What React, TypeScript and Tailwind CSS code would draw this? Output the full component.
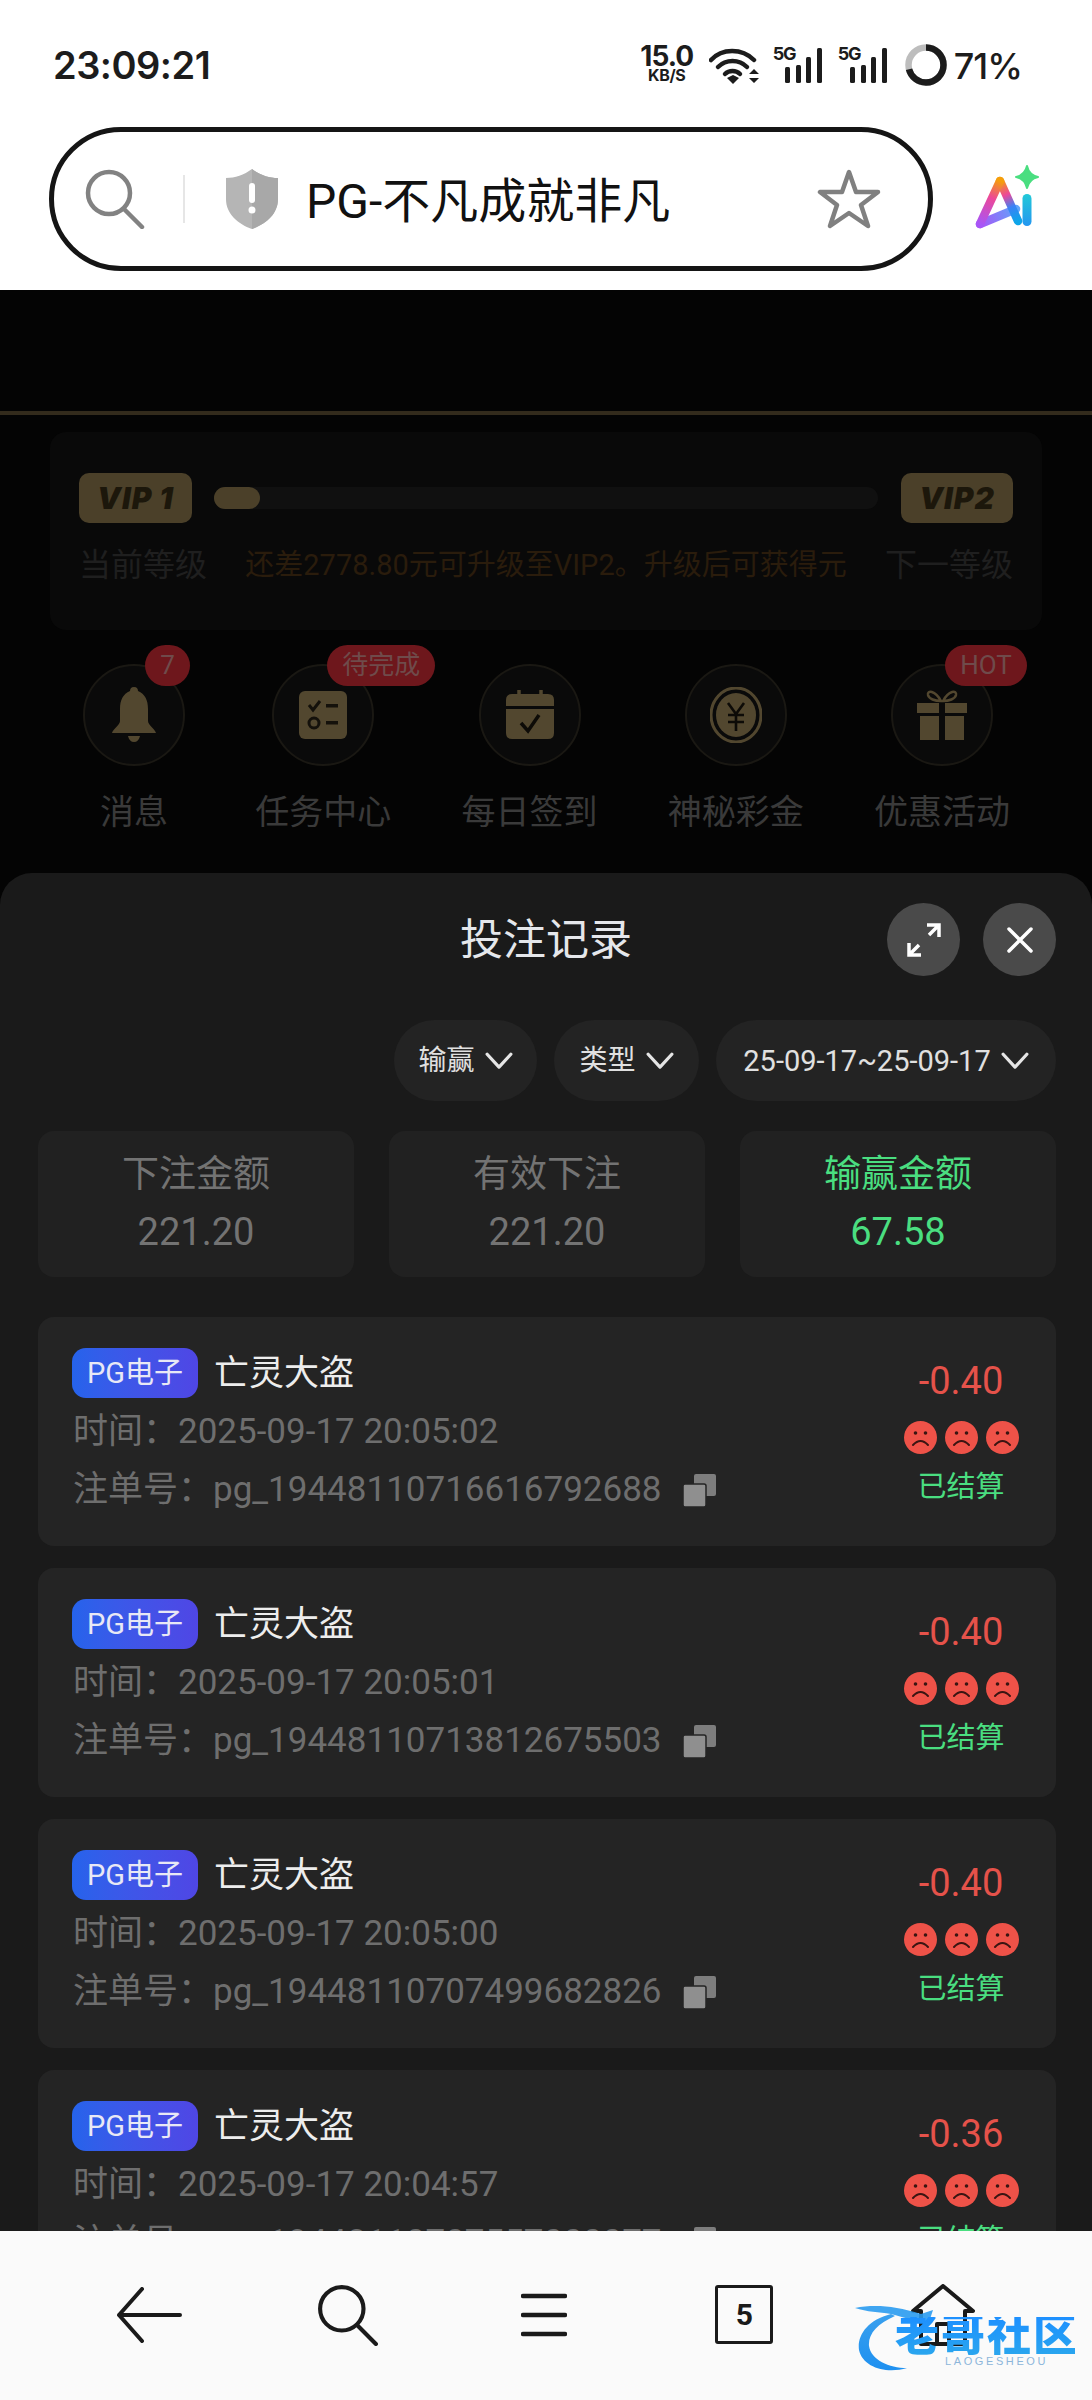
const FONT = 'font-["Roboto","Noto_Sans_CJK_SC",sans-serif]';

function Wifi() {
  return (
    <svg width="50" height="38" viewBox="0 0 50 38" className="block">
      <path d="M2 13 C13 1 33 1 45 13" fill="none" stroke="#1c1c1c" strokeWidth="4.5" strokeLinecap="round" />
      <path d="M9 20 C17 12 30 12 38 20" fill="none" stroke="#1c1c1c" strokeWidth="4.5" strokeLinecap="round" />
      <path d="M16 27 C20 23 27 23 31 27" fill="none" stroke="#1c1c1c" strokeWidth="4.5" strokeLinecap="round" />
      <path d="M18 31 L24 28 L30 31 L24 37 Z" fill="#1c1c1c" />
      <path d="M40 27 L45 22 L50 27 Z M40 31 L50 31 L45 36 Z" fill="#1c1c1c" />
    </svg>
  );
}

function Signal() {
  return (
    <div className="relative w-[49px] h-[38px]">
      <span className="absolute left-[-1px] top-[-2px] text-[18px] leading-[18px] font-bold text-[#1c1c1c] font-['Inter',sans-serif] tracking-[-1.2px]">5G</span>
      <svg width="49" height="38" viewBox="0 0 49 38" className="block">
        <rect x="11" y="20" width="5" height="16" rx="1.5" fill="#1c1c1c" />
        <rect x="22" y="18" width="5" height="18" rx="1.5" fill="#1c1c1c" />
        <rect x="32" y="10" width="5" height="26" rx="1.5" fill="#1c1c1c" />
        <rect x="43" y="1" width="5" height="35" rx="1.5" fill="#1c1c1c" />
      </svg>
    </div>
  );
}

function Ring() {
  return (
    <svg width="42" height="42" viewBox="0 0 42 42" className="block">
      <circle cx="21" cy="21" r="17.5" fill="none" stroke="#bdbdbd" strokeWidth="6.5" />
      <circle cx="21" cy="21" r="17.5" fill="none" stroke="#1c1c1c" strokeWidth="6.5" pathLength="100" strokeDasharray="71 29" transform="rotate(-90 21 21)" />
    </svg>
  );
}

function SearchGlass({ color, w, h, sw }: { color: string; w: number; h: number; sw: number }) {
  return (
    <svg width={w} height={h} viewBox="0 0 60 60" className="block">
      <circle cx="24" cy="24" r="21" fill="none" stroke={color} strokeWidth={sw} />
      <path d="M39 40 L57 58" stroke={color} strokeWidth={sw} strokeLinecap="round" />
    </svg>
  );
}

function Shield() {
  return (
    <svg width="56" height="62" viewBox="0 0 56 62" className="block">
      <path d="M28 1 C36 7 45 10 54 10 L54 31 C54 46 42 56 28 61 C14 56 2 46 2 31 L2 10 C11 10 20 7 28 1 Z" fill="#b5b5b5" />
      <path d="M28 1 C36 7 45 10 54 10 L54 31 C54 46 42 56 28 61 Z" fill="#a8a8a8" />
      <rect x="25" y="15" width="6" height="20" rx="3" fill="#fff" />
      <circle cx="28" cy="42" r="3.5" fill="#fff" />
    </svg>
  );
}

function Star() {
  return (
    <svg width="64" height="60" viewBox="0 0 64 60" className="block">
      <path d="M32 3 L39 23 L61 23 L44 36 L51 57 L32 44 L13 57 L20 36 L3 23 L25 23 Z" fill="none" stroke="#808080" strokeWidth="4.5" strokeLinejoin="round" />
    </svg>
  );
}

function AiLogo() {
  return (
    <svg width="66" height="64" viewBox="0 0 66 64" className="block overflow-visible">
      <defs>
        <linearGradient id="aiL" gradientUnits="userSpaceOnUse" x1="6" y1="57" x2="26" y2="14">
          <stop offset="0" stopColor="#a855f7" />
          <stop offset="0.6" stopColor="#ec4899" />
          <stop offset="1" stopColor="#f59e0b" />
        </linearGradient>
        <linearGradient id="aiC" gradientUnits="userSpaceOnUse" x1="6" y1="57" x2="42" y2="42">
          <stop offset="0" stopColor="#a855f7" />
          <stop offset="1" stopColor="#60a5fa" />
        </linearGradient>
        <linearGradient id="aiM" gradientUnits="userSpaceOnUse" x1="26" y1="14" x2="44" y2="54">
          <stop offset="0" stopColor="#f59e0b" />
          <stop offset="0.35" stopColor="#ec4899" />
          <stop offset="0.65" stopColor="#3b82f6" />
          <stop offset="1" stopColor="#0ea5e9" />
        </linearGradient>
        <linearGradient id="aiR" x1="0" y1="0" x2="0" y2="1">
          <stop offset="0" stopColor="#22c9d8" />
          <stop offset="1" stopColor="#2496f0" />
        </linearGradient>
      </defs>
      <path d="M6 57 L42 42" fill="none" stroke="url(#aiC)" strokeWidth="8.5" strokeLinecap="round" />
      <path d="M26 14 L44 54" fill="none" stroke="url(#aiM)" strokeWidth="8.5" strokeLinecap="round" />
      <path d="M6 57 L26 14" fill="none" stroke="url(#aiL)" strokeWidth="8.5" strokeLinecap="round" />
      <rect x="48.5" y="27" width="9" height="32" rx="4.5" fill="url(#aiR)" />
      <path d="M53 -1 Q55 8 64 10 Q55 12 53 21 Q51 12 42 10 Q51 8 53 -1 Z" fill="#4ade80" stroke="#4ade80" strokeWidth="2" strokeLinejoin="round" />
    </svg>
  );
}

const GOLD = "#52472f";

function Bell() {
  return (
    <svg width="46" height="56" viewBox="0 0 46 56" className="block">
      <path d="M23 0 C26 0 27 2 27 4 C34 7 37 13 37 22 L37 34 C37 38 44 42 45 46 L1 46 C2 42 9 38 9 34 L9 22 C9 13 12 7 19 4 C19 2 20 0 23 0 Z" fill={GOLD} />
      <path d="M17 49 L29 49 C28 53 26 55 23 55 C20 55 18 53 17 49 Z" fill={GOLD} />
    </svg>
  );
}

function Tasks() {
  return (
    <svg width="48" height="48" viewBox="0 0 48 48" className="block">
      <rect width="48" height="48" rx="6" fill={GOLD} />
      <path d="M10 14 L14 19 L21 10" fill="none" stroke="#14110b" strokeWidth="3" />
      <rect x="27" y="13" width="12" height="3.5" fill="#14110b" />
      <circle cx="15" cy="32" r="5" fill="none" stroke="#14110b" strokeWidth="3" />
      <rect x="27" y="30" width="12" height="3.5" fill="#14110b" />
    </svg>
  );
}

function Calendar() {
  return (
    <svg width="48" height="50" viewBox="0 0 48 50" className="block">
      <path d="M13 0 L13 7 M35 0 L35 7" stroke={GOLD} strokeWidth="3.5" strokeLinecap="round" />
      <path d="M6 4 L42 4 Q48 4 48 10 L48 16 L0 16 L0 10 Q0 4 6 4 Z" fill={GOLD} />
      <path d="M0 19 L48 19 L48 43 Q48 49 42 49 L6 49 Q0 49 0 43 Z" fill={GOLD} />
      <path d="M15 33 L22 41 L33 25" fill="none" stroke="#0d0b07" strokeWidth="3.5" />
    </svg>
  );
}

function Coin() {
  return (
    <svg width="52" height="56" viewBox="0 0 52 56" className="block">
      <ellipse cx="26" cy="28" rx="25" ry="27" fill="none" stroke={GOLD} strokeWidth="3" />
      <ellipse cx="26" cy="28" rx="20" ry="22" fill={GOLD} />
      <path d="M18 16 L26 27 L34 16 M18 28 L34 28 M18 35 L34 35 M26 27 L26 44" fill="none" stroke="#0d0b07" strokeWidth="2.6" />
    </svg>
  );
}

function Gift() {
  return (
    <svg width="50" height="50" viewBox="0 0 50 50" className="block">
      <path d="M24 11 C18 0 10 0 11 5 C12 9 18 11 24 11 Z M26 11 C32 0 40 0 39 5 C38 9 32 11 26 11 Z" fill="none" stroke={GOLD} strokeWidth="2.5" />
      <rect x="0" y="13" width="22" height="10" fill={GOLD} />
      <rect x="28" y="13" width="22" height="10" fill={GOLD} />
      <rect x="3" y="26" width="19" height="24" fill={GOLD} />
      <rect x="28" y="26" width="19" height="24" fill={GOLD} />
    </svg>
  );
}

function Chevron({ size = 28 }: { size?: number }) {
  return (
    <svg width={size} height={size * 0.62} viewBox="0 0 26 16" className="block">
      <path d="M2 2 L13 14 L24 2" fill="none" stroke="#e5e5e5" strokeWidth="3" strokeLinecap="round" strokeLinejoin="round" />
    </svg>
  );
}

function Face() {
  return (
    <svg width="33" height="33" viewBox="0 0 33 33" className="block">
      <circle cx="16.5" cy="16.5" r="16.5" fill="#ee5248" />
      <circle cx="11.5" cy="12" r="1.8" fill="#3a1512" />
      <circle cx="21.5" cy="12" r="1.8" fill="#3a1512" />
      <path d="M9 24 Q16.5 16 24 24" fill="none" stroke="#3a1512" strokeWidth="2" strokeLinecap="round" />
    </svg>
  );
}

function Copy() {
  return (
    <svg width="33" height="33" viewBox="0 0 33 33" className="block">
      <rect x="11" y="0" width="22" height="22" rx="2" fill="#7d7d7d" />
      <rect x="0" y="10" width="23" height="23" rx="2" fill="#8f8f8f" stroke="#242424" strokeWidth="1.5" />
    </svg>
  );
}

const shortcuts = [
  { label: "消息", icon: <Bell />, badge: "7", badgeClass: "left-[60px] w-[45px]" },
  { label: "任务中心", icon: <Tasks />, badge: "待完成", badgeClass: "left-[53px] w-[108px]" },
  { label: "每日签到", icon: <Calendar /> },
  { label: "神秘彩金", icon: <Coin /> },
  { label: "优惠活动", icon: <Gift />, badge: "HOT", badgeClass: "left-[52px] w-[82px]" },
];

function Shortcut({ s }: { s: (typeof shortcuts)[number] }) {
  return (
    <div className="flex flex-col items-center">
      <div className="relative w-[102px] h-[102px] rounded-full border-2 border-[#1a1813] bg-[#0a0a0a] flex items-center justify-center">
        {s.icon}
        {s.badge && (
          <span className={`absolute top-[-21px] h-[41px] rounded-full bg-[#6e171c] text-[#6f4b4b] text-[26px] leading-[41px] text-center whitespace-nowrap ${s.badgeClass}`}>
            {s.badge}
          </span>
        )}
      </div>
      <div className="mt-[26px] text-[34px] leading-[40px] text-[#3a3a3a] whitespace-nowrap">{s.label}</div>
    </div>
  );
}

const records = [
  { amt: "-0.40", time: "2025-09-17 20:05:02", id: "pg_19448110716616792688" },
  { amt: "-0.40", time: "2025-09-17 20:05:01", id: "pg_19448110713812675503" },
  { amt: "-0.40", time: "2025-09-17 20:05:00", id: "pg_19448110707499682826" },
  { amt: "-0.36", time: "2025-09-17 20:04:57", id: "pg_19448110707557000077" },
];

function Record({ r }: { r: (typeof records)[number] }) {
  return (
    <div className="shrink-0 h-[229px] rounded-[16px] bg-[#242424] flex justify-between pl-[34px] pr-[10px]">
      <div className="pt-[31px]">
        <div className="flex items-center gap-[16px] h-[50px]">
          <span className="w-[126px] h-[50px] rounded-[14px] bg-gradient-to-r from-[#2563eb] to-[#4f46e5] text-[#e8e8f5] text-[29px] leading-[50px] text-center whitespace-nowrap">PG电子</span>
          <span className="mt-[1px] text-[35px] leading-[50px] text-[#ededed]">亡灵大盗</span>
        </div>
        <div className="mt-[14px] h-[40px] text-[35px] leading-[40px] text-[#6e6e6e] whitespace-nowrap pl-[1px]">时间：{r.time}</div>
        <div className="mt-[18px] h-[40px] flex items-center gap-[21px] text-[35px] leading-[40px] text-[#6e6e6e] whitespace-nowrap pl-[1px]">
          <span>注单号：{r.id}</span>
          <Copy />
        </div>
      </div>
      <div className="w-[170px] flex flex-col items-center pt-[44px]">
        <div className="text-[38px] leading-[40px] text-[#e5524a]">{r.amt}</div>
        <div className="mt-[20px] flex gap-[8px]">
          <Face />
          <Face />
          <Face />
        </div>
        <div className="mt-[15px] text-[29px] leading-[36px] text-[#4ade80]">已结算</div>
      </div>
    </div>
  );
}

function Stat({ label, value, green }: { label: string; value: string; green?: boolean }) {
  return (
    <div className="h-[146px] rounded-[16px] bg-[#212121] flex flex-col items-center pt-[22px]">
      <div className={`text-[37px] leading-[44px] ${green ? "text-[#4ade80]" : "text-[#737373]"}`}>{label}</div>
      <div className={`mt-[13px] text-[38px] leading-[44px] ${green ? "text-[#4ade80]" : "text-[#737373]"}`}>{value}</div>
    </div>
  );
}

function Filter({ label, w, text }: { label: string; w: string; text: string }) {
  return (
    <div className={`h-[81px] rounded-full bg-[#232323] flex items-center justify-center gap-[10px] leading-[36px] text-[#e0e0e0] ${text} ${w}`}>
      <span className="whitespace-nowrap">{label}</span>
      <Chevron />
    </div>
  );
}

function Watermark() {
  return (
    <div className="absolute left-[855px] top-[69px] w-[220px] h-[72px]">
      <svg width="100" height="72" viewBox="0 0 100 72" className="absolute left-0 top-0">
        <defs>
          <linearGradient id="wmA" x1="0" y1="0" x2="0" y2="1">
            <stop offset="0" stopColor="#3aa0ee" />
            <stop offset="1" stopColor="#1e90f0" />
          </linearGradient>
        </defs>
        <path d="M36 14 C12 20 2 36 4 50 C8 68 32 74 52 68 C34 68 16 60 14 46 C13 34 22 24 40 16 Z" fill="url(#wmA)" />
        <path d="M0 8 C20 4 40 6 66 14 L78 10 L74 22 C60 22 52 18 36 14 C24 12 12 12 0 8 Z" fill="#2a9bf0" opacity="0.9" />
      </svg>
      <div className="absolute left-[40px] top-[17px] w-[180px] text-[44px] leading-[38px] font-black tracking-[2px] text-transparent bg-clip-text bg-gradient-to-b from-[#1e90ff] to-[#2aa5ee] whitespace-nowrap">老哥社区</div>
      <div className="absolute left-[90px] top-[55px] text-[11px] leading-[12px] tracking-[2.6px] text-[#8db6da] font-['Liberation_Sans',sans-serif]">LAOGESHEOU</div>
    </div>
  );
}

export default function App() {
  return (
    <div className={`w-[1092px] h-[2400px] flex flex-col overflow-hidden bg-[#040404] ${FONT}`}>
      <header className="shrink-0 h-[290px] bg-white">
        <div className="h-[127px] flex items-start justify-between pl-[53px] pr-[70px] pt-[44px] text-[#1c1c1c] font-['Inter',sans-serif]">
          <div className="text-[38px] leading-[42px] font-semibold tracking-[-0.5px]">23:09:21</div>
          <div className="flex items-start">
            <div className="w-[56px] flex flex-col items-center font-bold">
              <span className="text-[28px] leading-[24px] tracking-[-1px]">15.0</span>
              <span className="text-[16px] leading-[14px] tracking-[-0.3px]">KB/S</span>
            </div>
            <div className="ml-[14px] mt-[3px]"><Wifi /></div>
            <div className="ml-[15px] mt-[3px]"><Signal /></div>
            <div className="ml-[16px] mt-[3px]"><Signal /></div>
            <div className="ml-[17px]"><Ring /></div>
            <div className="ml-[7px] mt-[1px] text-[36px] leading-[42px] font-medium tracking-[-1px]">71%</div>
          </div>
        </div>
        <div className="flex items-center pl-[49px]">
          <div className="w-[884px] h-[144px] rounded-full border-[5px] border-[#151515] flex items-center pl-[31px] pr-[47px]">
            <SearchGlass color="#828282" w={60} h={60} sw={4.5} />
            <span className="ml-[38px] w-[2px] h-[48px] bg-[#e6e6e6]" />
            <span className="ml-[39px]"><Shield /></span>
            <span className="ml-[26px] mt-[6px] text-[48px] leading-[56px] text-[#111] whitespace-nowrap">PG-不凡成就非凡</span>
            <span className="ml-auto"><Star /></span>
          </div>
          <div className="ml-[41px]"><AiLogo /></div>
        </div>
      </header>

      <main className="flex-1 min-h-0 overflow-hidden bg-[#040404]">
        <div className="h-[125px] border-b-[4px] border-[#332b1c]" />
        <section className="mx-[50px] mt-[17px] h-[198px] rounded-[16px] bg-[#090909] px-[29px] pt-[41px]">
          <div className="flex items-center h-[50px]">
            <div className="w-[113px] h-[50px] rounded-[10px] bg-[#4b4029] flex items-center justify-center text-[30px] leading-none font-black italic tracking-[1px] text-[#1c170b] font-['Inter',sans-serif]">VIP 1</div>
            <div className="ml-[22px] flex-1 h-[22px] rounded-full bg-[#101010]">
              <div className="w-[46px] h-[22px] rounded-full bg-[#4b4029]" />
            </div>
            <div className="ml-[23px] w-[112px] h-[50px] rounded-[10px] bg-[#4b4029] flex items-center justify-center text-[30px] leading-none font-black italic tracking-[1px] text-[#1c170b] font-['Inter',sans-serif]">VIP2</div>
          </div>
          <div className="mt-[21px] flex items-center justify-between text-[32px] leading-[42px] whitespace-nowrap">
            <span className="text-[#1f1f1f]">当前等级</span>
            <span className="text-[#2a1c0c] text-[29px]">还差2778.80元可升级至VIP2。升级后可获得元</span>
            <span className="text-[#1f1f1f]">下一等级</span>
          </div>
        </section>
        <section className="mt-[34px] h-[209px] flex items-start justify-between pl-[83px] pr-[82px]">
          {shortcuts.map((s) => (
            <Shortcut key={s.label} s={s} />
          ))}
        </section>
        <section className="rounded-t-[32px] bg-[#1a1a1a] pt-[30px]">
          <div className="grid grid-cols-[1fr_auto_1fr] items-center h-[73px]">
            <span />
            <h1 className="text-[43px] leading-[52px] font-normal text-[#e5e7eb]">投注记录</h1>
            <div className="flex justify-end gap-[23px] pr-[36px]">
              <button className="w-[73px] h-[73px] rounded-full bg-[#4a4a4a] flex items-center justify-center">
                <svg width="36" height="36" viewBox="0 0 36 36">
                  <path d="M21 3 L33 3 L33 15 M33 3 L23 13" fill="none" stroke="#fff" strokeWidth="3.5" />
                  <path d="M15 33 L3 33 L3 21 M3 33 L13 23" fill="none" stroke="#fff" strokeWidth="3.5" />
                </svg>
              </button>
              <button className="w-[73px] h-[73px] rounded-full bg-[#4a4a4a] flex items-center justify-center">
                <svg width="26" height="26" viewBox="0 0 26 26">
                  <path d="M2 2 L24 24 M24 2 L2 24" stroke="#fff" strokeWidth="3.5" strokeLinecap="round" />
                </svg>
              </button>
            </div>
          </div>
          <div className="mt-[44px] flex justify-end gap-[17px] pr-[36px]">
            <Filter label="输赢" w="w-[143px]" text="text-[28px]" />
            <Filter label="类型" w="w-[145px]" text="text-[28px]" />
            <Filter label="25-09-17~25-09-17" w="w-[340px]" text="text-[29px]" />
          </div>
          <div className="mt-[30px] grid grid-cols-3 gap-[35px] pl-[38px] pr-[36px]">
            <Stat label="下注金额" value="221.20" />
            <Stat label="有效下注" value="221.20" />
            <Stat label="输赢金额" value="67.58" green />
          </div>
          <div className="mt-[40px] flex flex-col gap-[22px] pl-[38px] pr-[36px] pb-[40px]">
            {records.map((r) => (
              <Record key={r.id} r={r} />
            ))}
          </div>
        </section>
      </main>

      <footer className="relative shrink-0 h-[169px] bg-[#fafafa] grid grid-cols-5 items-center px-[50px] pb-[2px]">
        <div className="flex justify-center">
          <svg width="66" height="56" viewBox="0 0 66 56" className="block">
            <path d="M64 28 L3 28 M26 2 L3 28 L26 54" fill="none" stroke="#1a1a1a" strokeWidth="4" strokeLinecap="round" strokeLinejoin="round" />
          </svg>
        </div>
        <div className="flex justify-center">
          <SearchGlass color="#1a1a1a" w={62} h={62} sw={4} />
        </div>
        <div className="flex justify-center">
          <svg width="46" height="44" viewBox="0 0 46 44" className="block -ml-[4px]">
            <path d="M2 3 L44 3 M2 22 L44 22 M2 41 L44 41" stroke="#1a1a1a" strokeWidth="4.5" strokeLinecap="round" />
          </svg>
        </div>
        <div className="flex justify-center">
          <div className="w-[58px] h-[59px] rounded-[3px] border-[3.5px] border-[#1a1a1a] flex items-center justify-center text-[30px] leading-none font-bold text-[#1a1a1a]">5</div>
        </div>
        <div className="flex justify-center">
          <svg width="64" height="62" viewBox="0 0 64 62" className="block">
            <path d="M2 27 L32 2 L62 27 L54 27 L54 60 L10 60 L10 27 Z M26 60 L26 40 L38 40 L38 60" fill="none" stroke="#1a1a1a" strokeWidth="4" strokeLinejoin="round" />
          </svg>
        </div>
        <Watermark />
      </footer>
    </div>
  );
}
